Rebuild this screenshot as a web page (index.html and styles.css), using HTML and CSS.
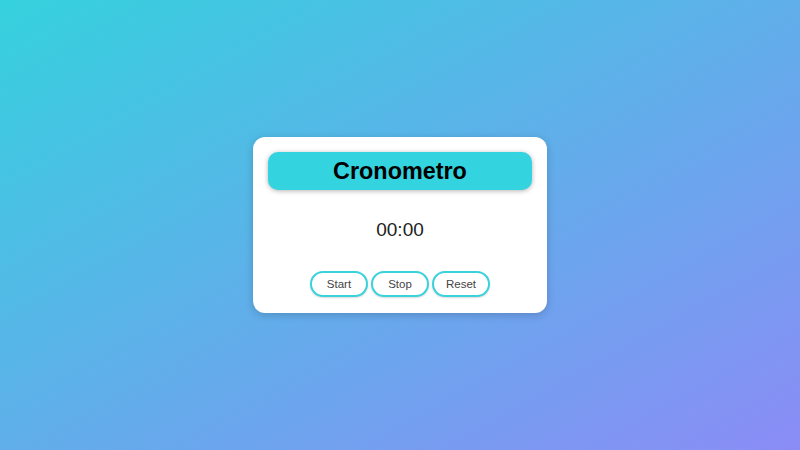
FILE: index.html
```html
<!DOCTYPE html>
<html lang="es">
<head>
<meta charset="utf-8">
<title>Cronometro</title>
<link rel="stylesheet" href="styles.css">
</head>
<body>
<main class="card">
  <h1 class="title">Cronometro</h1>
  <p class="time">00:00</p>
  <div class="controls">
    <button class="btn">Start</button>
    <button class="btn">Stop</button>
    <button class="btn">Reset</button>
  </div>
</main>
</body>
</html>
```
FILE: styles.css
```css
html, body {
  margin: 0;
  height: 100%;
}
body {
  font-family: "Liberation Sans", Arial, sans-serif;
  background: linear-gradient(to bottom right, #35d1de, #8b8cf6);
  display: flex;
  align-items: center;
  justify-content: center;
}
.card {
  width: 294px;
  box-sizing: border-box;
  background: #fff;
  border-radius: 12px;
  padding: 15px 15px 16px;
  box-shadow: 0 2px 8px rgba(0, 0, 0, 0.18);
  display: flex;
  flex-direction: column;
  align-items: stretch;
}
.title {
  margin: 0;
  height: 38px;
  line-height: 38px;
  background: #33d3df;
  border-radius: 10px;
  text-align: center;
  font-size: 23.4px;
  font-weight: bold;
  color: #000;
  box-shadow: 0 1px 5px rgba(0, 0, 0, 0.3);
}
.time {
  margin: 28px 0 0;
  line-height: 23px;
  font-size: 19px;
  text-align: center;
  color: #222;
}
.controls {
  margin-top: 30px;
  display: flex;
  justify-content: center;
  gap: 3px;
}
.btn {
  width: 58px;
  height: 26px;
  box-sizing: border-box;
  border: 2px solid #3ad2dd;
  border-radius: 13px;
  background: #fff;
  font-family: "Liberation Sans", Arial, sans-serif;
  font-size: 11.5px;
  color: #444;
  padding: 0;
  box-shadow: 0 1px 2px rgba(0, 0, 0, 0.15);
}
```
